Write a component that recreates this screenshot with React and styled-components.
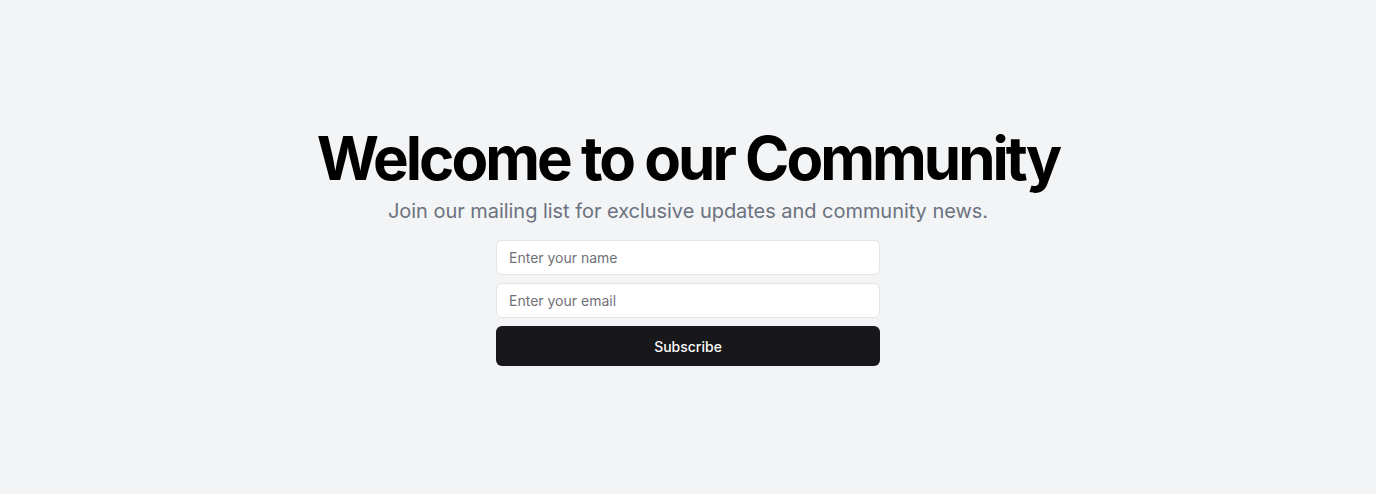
import React from 'react'
import styled, { createGlobalStyle } from 'styled-components'

const GlobalStyle = createGlobalStyle`
  * {
    box-sizing: border-box;
  }

  body {
    margin: 0;
    background: #f3f4f6;
    font-family: Inter, "Noto Sans", sans-serif;
  }
`

const Page = styled.main`
  min-height: 100vh;
  display: flex;
  flex-direction: column;
  align-items: center;
  justify-content: center;
  padding: 0 16px;
`

const Title = styled.h1`
  margin: 0;
  font-size: 60px;
  line-height: 1;
  font-weight: 700;
  letter-spacing: -0.05em;
  color: #000;
  text-align: center;
`

const Subtitle = styled.p`
  margin: 9px 0 0;
  font-size: 20px;
  line-height: 28px;
  letter-spacing: -0.002em;
  color: #6b7280;
  text-align: center;
`

const Form = styled.form`
  width: 100%;
  max-width: 384px;
  margin-top: 15px;
  display: flex;
  flex-direction: column;
  gap: 8px;
`

const Input = styled.input`
  height: 35px;
  width: 100%;
  padding: 0 12px;
  border: 1px solid #e4e4e7;
  border-radius: 6px;
  background: #fff;
  font-family: inherit;
  font-size: 14px;
  color: #09090b;
  outline: none;

  &::placeholder {
    color: #71717a;
  }
`

const Button = styled.button`
  height: 40px;
  width: 100%;
  border: none;
  border-radius: 6px;
  background: #18181b;
  color: #fafafa;
  font-family: inherit;
  font-size: 14px;
  font-weight: 500;
  cursor: pointer;
`

export default function App() {
  return (
    <>
      <GlobalStyle />
      <Page>
        <Title>Welcome to our Community</Title>
        <Subtitle>Join our mailing list for exclusive updates and community news.</Subtitle>
        <Form onSubmit={e => e.preventDefault()}>
          <Input type="text" placeholder="Enter your name" />
          <Input type="email" placeholder="Enter your email" />
          <Button type="submit">Subscribe</Button>
        </Form>
      </Page>
    </>
  )
}
